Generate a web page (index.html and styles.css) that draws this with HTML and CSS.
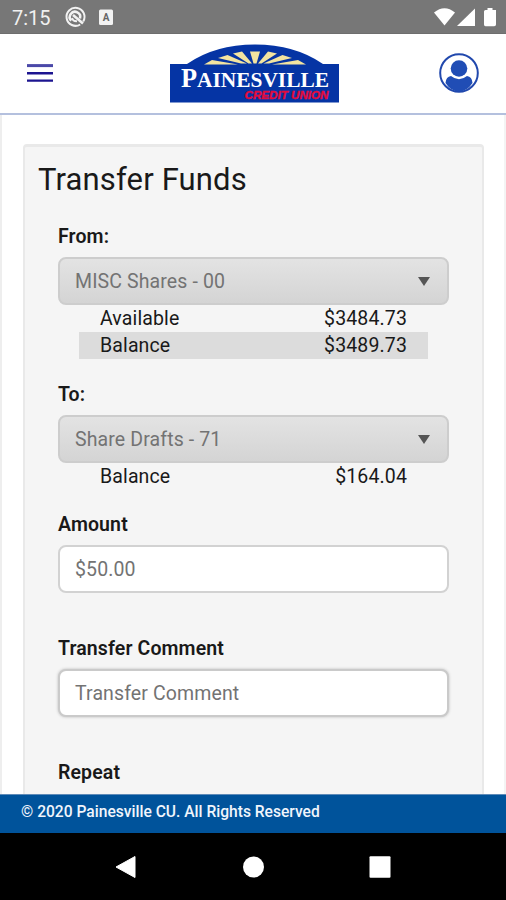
FILE: index.html
```html
<!DOCTYPE html>
<html lang="en">
<head>
<meta charset="utf-8">
<title>Transfer Funds</title>
<link rel="stylesheet" href="styles.css">
</head>
<body>
<div class="screen">
  <div class="status">
    <span class="clock">7:15</span>
    <svg class="status-left" width="50" height="34" viewBox="0 0 50 34">
      <path d="M16.200 24.500A9 9 0 1 1 19.200 21.500" fill="none" stroke="#f2f2f2" stroke-width="2"/>
      <path d="M7.300 20.700A5.200 5.200 0 1 1 16 18.500" fill="none" stroke="#f2f2f2" stroke-width="2.600"/>
      <path d="M9 15l10 8.500" stroke="#f2f2f2" stroke-width="2.600"/>
      <path d="M8 18q1 3.500 5 3.200" fill="none" stroke="#f2f2f2" stroke-width="1.800"/>
      <rect x="35" y="9.500" width="14" height="15.500" rx="1.500" fill="#f2f2f2"/>
      <text class="badge-a" x="42" y="21" text-anchor="middle">A</text>
    </svg>
    <svg class="status-right" width="66" height="34" viewBox="0 0 66 34">
      <path d="M4 12.500Q14.500 4 25 12.500L14.500 25.500Z" fill="#fff"/>
      <path d="M27 26L45 8.500V26Z" fill="#fff"/>
      <path d="M54.500 10h3V8h5v2h3.500v14.500q0 1.800-1.800 1.800H55.500q-1.500 0-1.500-1.800V11.500q0-1.500 1.500-1.500Z" fill="#fff"/>
    </svg>
  </div>
  <header class="header">
    <svg class="menu" width="28" height="20" viewBox="0 0 28 20">
      <path d="M1 2.600H27" stroke="#4a48a8" stroke-width="3"/>
      <path d="M1 10.200H27M1 17.600H27" stroke="#1c1490" stroke-width="2.400"/>
    </svg>
    <svg class="logo" width="170" height="60" viewBox="0 0 170 60">
      <path d="M0 20H17Q45 .5 85 .5T153 20H169V58.500H0Z" fill="#0534a4"/>
      <g fill="#f3e4a0">
        <path d="M80 7.500H90L86.500 19.500H83.500Z"/>
        <path d="M63 9.500L72 7.500L82 19.500H78.500Z"/>
        <path d="M98 7.500L107 9.500L91.500 19.500H88Z"/>
        <path d="M48 14L57.500 11L77 19.500H71Z"/>
        <path d="M112.500 11L122 14L99 19.500H93.500Z"/>
        <path d="M34 20.500L42 16L68 20.500Z"/>
        <path d="M128 16L136 20.500H102Z"/>
      </g>
      <text class="brand" x="11" y="43" textLength="148" lengthAdjust="spacingAndGlyphs"><tspan class="brand-cap">P</tspan>AINESVILLE</text>
      <text class="brand-sub" x="74.500" y="54.900" textLength="84" lengthAdjust="spacingAndGlyphs">CREDIT UNION</text>
    </svg>
    <svg class="user" width="40" height="40" viewBox="0 0 40 40">
      <circle cx="20" cy="20" r="18.800" fill="#fff" stroke="#2148ad" stroke-width="2"/>
      <circle cx="20" cy="15.500" r="8.300" fill="#204db5"/>
      <path d="M6.500 30Q7 23.500 12 23Q20 29.500 28 23Q33 23.500 33.500 30Q28 38.500 20 38.500T6.500 30Z" fill="#204db5"/>
    </svg>
  </header>
  <main class="content">
    <section class="panel">
      <h1 class="title">Transfer Funds</h1>
      <div class="group from">
        <div class="label">From:</div>
        <div class="field select"><span>MISC Shares - 00</span><i class="caret"></i></div>
        <div class="row"><span>Available</span><span>$3484.73</span></div>
        <div class="row shaded"><span>Balance</span><span>$3489.73</span></div>
      </div>
      <div class="group to">
        <div class="label">To:</div>
        <div class="field select"><span>Share Drafts - 71</span><i class="caret"></i></div>
        <div class="row"><span>Balance</span><span>$164.04</span></div>
      </div>
      <div class="group amount">
        <div class="label">Amount</div>
        <div class="field input">$50.00</div>
      </div>
      <div class="group comment">
        <div class="label">Transfer Comment</div>
        <div class="field input raised">Transfer Comment</div>
      </div>
      <div class="group repeat">
        <div class="label">Repeat</div>
      </div>
    </section>
  </main>
  <footer class="footer">© 2020 Painesville CU. All Rights Reserved</footer>
  <nav class="nav">
    <svg width="22" height="24" viewBox="0 0 22 24"><path d="M1 12L20 1.500V22.500Z" fill="#fff" stroke="#fff" stroke-linejoin="round"/></svg>
    <svg width="22" height="24" viewBox="0 0 22 24"><circle cx="11.500" cy="12" r="10.500" fill="#fff"/></svg>
    <svg width="22" height="24" viewBox="0 0 22 24"><rect x=".5" y="1.200" width="21" height="21.500" rx="1" fill="#fff"/></svg>
  </nav>
</div>
</body>
</html>
```
FILE: styles.css
```css
* { box-sizing: border-box; }
body { margin: 0; font-family: Roboto, "Liberation Sans", sans-serif; color: #191919; }
.screen { width: 506px; height: 900px; display: flex; flex-direction: column; overflow: hidden; background: #fff; }
.status { height: 34px; flex: none; background: #777; display: flex; align-items: center; padding: 0 10px 0 12px; border-bottom: 1px solid #6e6e6e; }
.clock { width: 52px; font-size: 20px; line-height: 34px; color: #f0f0f0; padding-top: 2px; }
.status-right { margin-left: auto; }
.badge-a { font: 700 10px Roboto, sans-serif; fill: #666; }
.header { height: 81px; flex: none; display: flex; align-items: center; padding: 0 27px 2px 26px; border-bottom: 2px solid #b4c0de; }
.logo { margin: 2px 0 0 116px; }
.user { margin-left: auto; }
.brand { font: 700 22px "Liberation Serif", serif; fill: #fff; }
.brand-cap { font-size: 27px; }
.brand-sub { font: italic 700 10.5px "Liberation Sans", sans-serif; fill: #e40b3c; stroke: #e40b3c; stroke-width: .4px; }
.content { flex: 1; min-height: 0; overflow: hidden; padding: 29px 20px 0 21px; border-left: 2px solid #eee; border-right: 2px solid #f4f4f4; }
.panel { height: 720px; background: #f5f5f5; border: 2px solid #e9e9e9; border-top-width: 3px; border-radius: 4px; padding: 13px 33px 0; }
.title { margin: 0 0 0 -20px; font-size: 31px; line-height: 40px; font-weight: 400; letter-spacing: .15px; }
.from { margin-top: 25px; }
.to { margin-top: 23px; }
.amount { margin-top: 22px; }
.comment { margin-top: 43px; }
.repeat { margin-top: 43px; }
.label { height: 32px; line-height: 23px; font-size: 19.5px; font-weight: 600; letter-spacing: .12px; }
.group + .group { padding-top: 1px; }
.field { height: 48px; border: 2px solid #d2d2d2; border-radius: 8px; padding: 0 15px; font-size: 19.5px; line-height: 45px; color: #737373; background: #fff; letter-spacing: .12px; }
.select { display: flex; justify-content: space-between; align-items: center; background: linear-gradient(#e3e3e3, #d4d4d4); border-color: #cdcdcd; padding-right: 17px; }
.select span { line-height: 43px; }
.caret { border: 6px solid transparent; border-top: 9px solid #555; border-bottom: 0; margin-top: 1px; }
.raised { border-color: #cacaca; box-shadow: 0 0 3px #bbb; }
.row { height: 27px; margin: 0 21px; padding: 0 21px; display: flex; justify-content: space-between; font-size: 19.5px; line-height: 27px; letter-spacing: .13px; }
.shaded { background: #dcdcdc; }
.footer { height: 39px; flex: none; background: #00539b; color: #f0f5fc; font-size: 15.6px; line-height: 34px; font-weight: 500; padding-left: 21px; border-top: 1px solid #5f8bb8; }
.nav { height: 67px; flex: none; background: #000; display: flex; justify-content: space-between; align-items: center; padding: 0 115px; }
```
